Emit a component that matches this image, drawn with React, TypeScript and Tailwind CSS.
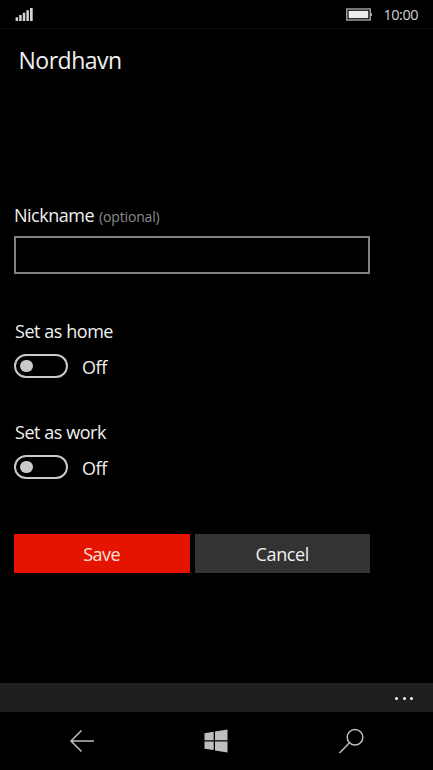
const toggles = [
  { id: "home", label: "Set as home" },
  { id: "work", label: "Set as work" },
];

function StatusBar() {
  return (
    <div className="flex h-[29px] shrink-0 items-start justify-between border-b border-[#0b0b0b] pl-[15px] pr-[15px]">
      <svg className="mt-2" width="18" height="13" viewBox="0 0 18 13" fill="#d4d4d4" aria-hidden>
        <rect x="0.6" y="9.3" width="2.5" height="3.700" />
        <rect x="4.2" y="7" width="2.500" height="6" />
        <rect x="7.8" y="4.700" width="2.500" height="8.300" />
        <rect x="11.4" y="2.200" width="2.500" height="10.800" />
        <rect x="15" y="0" width="2.700" height="13" />
      </svg>
      <div className="flex h-[29px] items-center gap-[12px]">
        <svg width="26" height="13" viewBox="0 0 26 13" aria-hidden>
          <rect x="0.8" y="1" width="23.4" height="11" fill="none" stroke="#a8a8a8" strokeWidth="1.4" />
          <rect x="2.600" y="2.800" width="19.700" height="7.400" fill="#ececec" />
          <rect x="24.500" y="5" width="1.300" height="3" fill="#c4c4c4" />
        </svg>
        <span className="pt-px text-[14.500px] leading-none tracking-[-0.5px] text-[#d2d2d2]">10:00</span>
      </div>
    </div>
  );
}

function Toggle({ label }: { label: string }) {
  return (
    <div className="h-[101px]">
      <div className="pl-px text-[18px] leading-6 tracking-[-0.45px]">{label}</div>
      <div className="mt-[11px] flex h-6 items-center gap-[14px]">
        <button
          role="switch"
          aria-checked={false}
          aria-label={label}
          className="flex h-6 w-[54px] items-center rounded-full border-2 border-[#cacaca] pl-[4px]"
        >
          <span className="size-[12.5px] rounded-full bg-[#cacaca]" />
        </button>
        <span className="pt-[2px] text-[18px] leading-6 tracking-[-0.4px]">Off</span>
      </div>
    </div>
  );
}

export default function App() {
  return (
    <div className="flex h-[770px] w-[433px] flex-col overflow-hidden bg-black font-['Open_Sans','Noto_Sans',sans-serif] text-[#f0f0f0]">
      <StatusBar />

      <main className="flex-1 pl-[14px]">
        <h1 className="mt-[15px] pl-[4.5px] text-[23px] leading-8 tracking-[-0.5px]">Nordhavn</h1>

        <div className="mt-[127px] flex h-6 items-baseline gap-[5px] leading-6">
          <label htmlFor="nickname" className="text-[18px] tracking-[-0.5px]">
            Nickname
          </label>
          <span className="text-[14px] tracking-[-0.15px] text-[#8c8c8c]">(optional)</span>
        </div>
        <input
          id="nickname"
          className="mt-[9px] block h-[38px] w-[356px] border-2 border-[#808080] bg-black px-2 outline-none"
        />

        <div className="mt-[45px]">
          {toggles.map((t) => (
            <Toggle key={t.id} label={t.label} />
          ))}
        </div>

        <div className="mt-[13px] flex h-[39px] w-[356px] gap-[5px] text-[18px]">
          <button className="flex-1 bg-[#e51400] pt-[2px] tracking-[-0.5px] text-[#ffe4de]">Save</button>
          <button className="flex-1 bg-[#333333] pt-[2px] tracking-[-0.4px]">Cancel</button>
        </div>
      </main>

      <div className="flex h-[29px] shrink-0 items-center justify-end gap-[4.500px] bg-[#1f1f1f] pr-[20px] pt-px">
        <span className="size-[3px] rounded-full bg-white" />
        <span className="size-[3px] rounded-full bg-white" />
        <span className="size-[3px] rounded-full bg-white" />
      </div>

      <nav className="flex h-[58px] shrink-0 items-center justify-between pl-[68px] pr-[69px]">
        <button aria-label="Back">
          <svg width="26" height="26" viewBox="0 0 26 26" fill="none" stroke="#bdbdbd" strokeWidth="1.5">
            <path d="M13.500 2.500 3 13l10.500 10.500M3 13h23" />
          </svg>
        </button>
        <button aria-label="Start">
          <svg width="24" height="24" viewBox="0 0 24 24" fill="#bfbfbf">
            <path d="M.5 4.200 9.700 2.700v8.500H.5zM11 2.500 23.500.5v10.700H11zM.5 12.500h9.200v8.600L.5 19.700zM11 12.500h12.500V23.500L11 21.400z" />
          </svg>
        </button>
        <button aria-label="Search">
          <svg width="26" height="26" viewBox="0 0 26 26" fill="none" stroke="#bdbdbd" strokeWidth="1.500">
            <circle cx="17" cy="9.200" r="7.800" />
            <path d="M11.500 14.800 1.500 25" />
          </svg>
        </button>
      </nav>
    </div>
  );
}
